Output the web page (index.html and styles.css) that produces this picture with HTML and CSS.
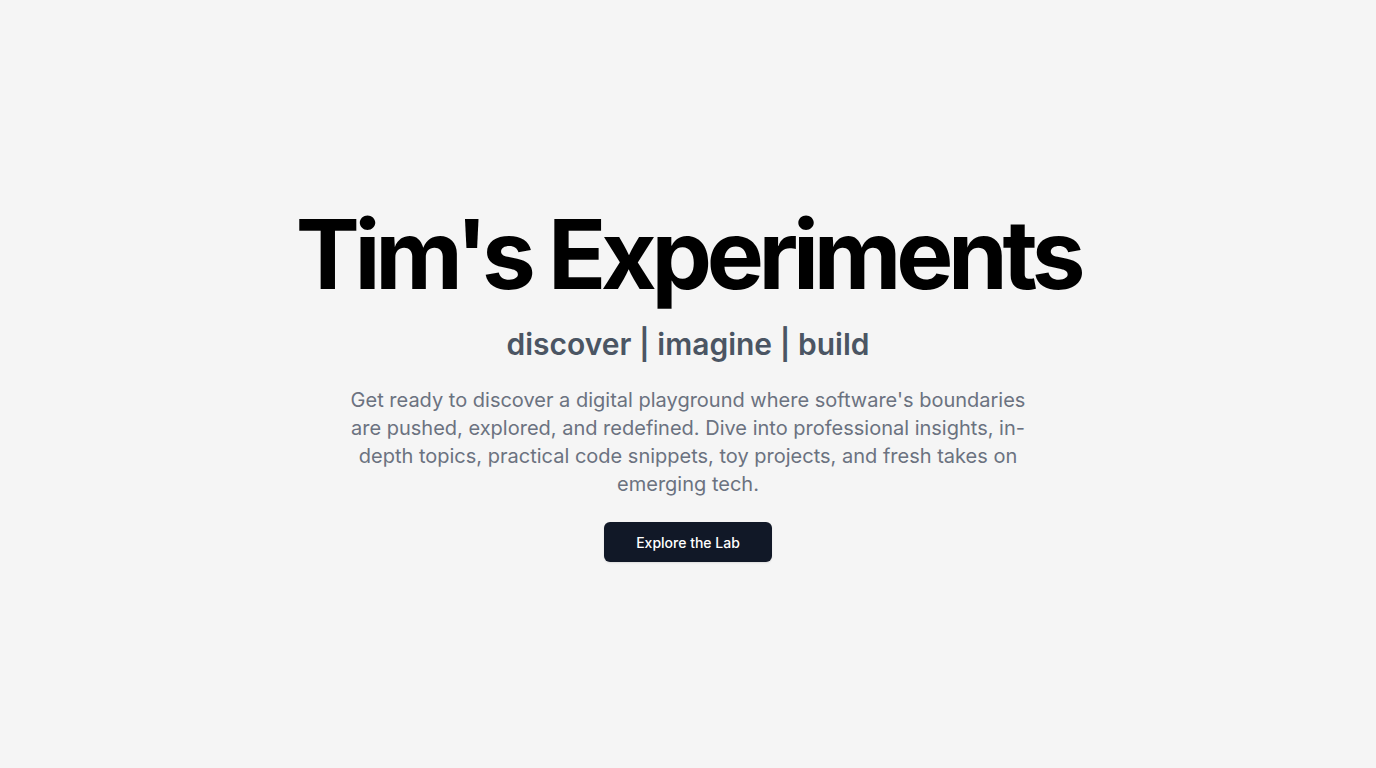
FILE: index.html
```html
<!DOCTYPE html>
<html lang="en">
<head>
<meta charset="utf-8">
<title>Tim's Experiments</title>
<link rel="stylesheet" href="styles.css">
</head>
<body>
<main class="hero">
  <h1 class="title">Tim's Experiments</h1>
  <h2 class="tagline">discover | imagine | build</h2>
  <p class="intro">Get ready to discover a digital playground where software's boundaries are pushed, explored, and redefined. Dive into professional insights, in-depth topics, practical code snippets, toy projects, and fresh takes on emerging tech.</p>
  <a class="cta" href="#">Explore the Lab</a>
</main>
</body>
</html>
```
FILE: styles.css
```css
html, body {
  margin: 0;
  padding: 0;
}
body {
  background: #f5f5f5;
  font-family: Inter, "Noto Sans", sans-serif;
}
.hero {
  min-height: 100vh;
  display: flex;
  flex-direction: column;
  align-items: center;
  justify-content: center;
  text-align: center;
  padding: 0 16px;
  box-sizing: border-box;
}
.title {
  margin: 0;
  font-size: 96px;
  line-height: 1;
  font-weight: 700;
  letter-spacing: -0.055em;
  color: #000;
}
.tagline {
  margin: 24px 0 0;
  font-size: 30px;
  line-height: 36px;
  font-weight: 600;
  color: #4b5563;
}
.intro {
  margin: 24px 0 0;
  max-width: 680px;
  font-size: 20px;
  line-height: 28px;
  color: #6b7280;
}
.cta {
  margin-top: 24px;
  display: inline-flex;
  align-items: center;
  justify-content: center;
  height: 40px;
  padding: 0 32px;
  border-radius: 6px;
  background: #111827;
  color: #fff;
  font-size: 14px;
  font-weight: 500;
  text-decoration: none;
  box-shadow: 0 1px 2px rgba(0,0,0,0.1);
}
```
